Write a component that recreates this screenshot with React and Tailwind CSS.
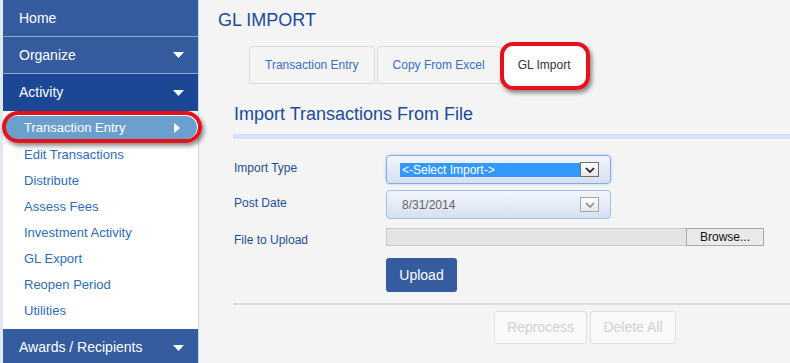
import React from 'react';

const menuItems = ['Edit Transactions', 'Distribute', 'Assess Fees', 'Investment Activity', 'GL Export', 'Reopen Period', 'Utilities'];

const Caret = () => (
  <svg width="11" height="6" viewBox="0 0 11 6" className="mr-[14px]">
    <polygon points="0,0 11,0 5.5,6" fill="#ffffff" />
  </svg>
);

const MenuHeader = ({ label, caret, dark, border = true }) => (
  <div
    className={`h-[37px] flex items-center justify-between pl-[16px] text-[14px] text-white ${
      dark ? 'bg-[#1b4795]' : 'bg-[#345c9f]'
    } ${border ? 'border-b border-[#8ea7cf]' : ''}`}
  >
    <span>{label}</span>
    {caret && <Caret />}
  </div>
);

const ArrowBox = ({ muted }) => (
  <div
    className={`w-[19px] h-[15px] flex items-center justify-center border bg-linear-to-b from-white to-[#e6e6e6] ${
      muted ? 'border-[#a5a5a5]' : 'border-[#707070]'
    }`}
  >
    <svg width="10" height="6" viewBox="0 0 10 6">
      <polyline points="1,1 5,5 9,1" fill="none" stroke={muted ? '#8a8a8a' : '#111111'} strokeWidth="1.6" />
    </svg>
  </div>
);

const SelectBox = ({ focused, children }) => (
  <div
    className={`h-[29px] w-[225px] rounded-[4px] border bg-linear-to-b from-[#f2f6fb] to-[#d5e0f0] flex items-center pl-[13px] pr-[11px] ${
      focused ? 'border-[#82ace6] shadow-[0_0_3px_#a8c8f0]' : 'border-[#a6c1e6]'
    }`}
  >
    {children}
  </div>
);

const App = () => {
  return (
    <div className="flex h-[363px] overflow-hidden bg-[#f4f4f4]" style={{ fontFamily: '"Liberation Sans", Arial, sans-serif' }}>
      {/* sidebar */}
      <div className="relative w-[199px] shrink-0 border-l-[3px] border-l-[#e3e7ee] border-r border-r-[#c6d5ec] bg-white">
        <MenuHeader label="Home" />
        <MenuHeader label="Organize" caret />
        <MenuHeader label="Activity" caret dark border={false} />

        <div className="bg-white pt-[5px] pb-[5px]">
          <div className="ml-[2px] mr-[1px] h-[23px] mb-[3px] rounded-full bg-[#6b9fcd] flex items-center justify-between pl-[19px] pr-[17px] text-[13px] text-white">
            <span>Transaction Entry</span>
            <svg width="6" height="10" viewBox="0 0 6 10">
              <polygon points="0,0 6,5 0,10" fill="#ffffff" />
            </svg>
          </div>
          {menuItems.map((item) => (
            <div key={item} className="h-[26px] leading-[26px] pl-[21px] text-[13px] text-[#2f6db5]">
              {item}
            </div>
          ))}
        </div>

        <MenuHeader label="Awards / Recipients" caret border={false} />

        {/* annotation ring */}
        <div className="absolute left-[-1px] top-[111px] w-[200px] h-[32px] rounded-full border-[4px] border-[#e5121b] shadow-[2px_3px_4px_rgba(0,0,0,0.45)] z-10 pointer-events-none" />
      </div>

      {/* main */}
      <div className="flex-1 pl-[19px] pt-[10px]">
        <h1 className="text-[18px] leading-[20px] text-[#1d4b9a]">GL IMPORT</h1>

        <div className="mt-[16px] ml-[31px] flex gap-[2px] text-[12px]">
          <div className="h-[38px] px-[15px] flex items-center border border-[#dcdcdc] rounded-t-[4px] bg-[#f4f4f4] text-[#3b6fc6]">
            Transaction Entry
          </div>
          <div className="h-[38px] px-[15px] flex items-center border border-[#dcdcdc] rounded-t-[4px] bg-[#f4f4f4] text-[#3b6fc6]">
            Copy From Excel
          </div>
          <div className="relative h-[38px] px-[15px] flex items-center bg-white text-[#333333]">
            GL Import
            <div className="absolute -left-[3px] -right-[4px] -top-[4px] -bottom-[6px] rounded-[13px] border-[4px] border-[#e5121b] shadow-[2px_3px_4px_rgba(0,0,0,0.45)] pointer-events-none" />
          </div>
        </div>

        <div className="ml-[15px] mt-[20px]">
          <h2 className="pl-[1px] text-[18px] leading-[20px] text-[#1d4b9a]">Import Transactions From File</h2>
          <div className="mt-[10px] h-[5px] bg-[#d6e2f3]" />

          <div className="mt-[16px] flex flex-col gap-[6px] text-[12px]">
            <div className="flex items-center">
              <div className="w-[153px] pl-[1px] pb-[3px] text-[#1f4e9a]">Import Type</div>
              <SelectBox focused>
                <div className="flex-1 h-[14px] leading-[14px] bg-[#3399ff] text-white pl-[2px]">&lt;-Select Import-&gt;</div>
                <ArrowBox />
              </SelectBox>
            </div>
            <div className="flex items-center">
              <div className="w-[153px] pl-[1px] pb-[3px] text-[#1f4e9a]">Post Date</div>
              <SelectBox>
                <div className="flex-1 pl-[2px] text-[#666666]">8/31/2014</div>
                <ArrowBox muted />
              </SelectBox>
            </div>
            <div className="flex items-center">
              <div className="w-[153px] pl-[1px] pt-[6px] text-[#1f4e9a]">File to Upload</div>
              <div className="w-[378px] h-[18px] flex">
                <div className="flex-1 bg-[#e4e4e4] border border-[#c9c9c9] border-r-0" />
                <div className="w-[78px] border border-[#a8a8a8] bg-[#eaeaea] text-[#111111] flex items-center justify-center">
                  Browse...
                </div>
              </div>
            </div>
          </div>

          <button className="mt-[9px] ml-[153px] h-[34px] w-[71px] rounded-[3px] bg-[#345c9f] text-[14px] text-white">
            Upload
          </button>

          <div className="mt-[11px] h-[2px] bg-[#dcdcdc]" />

          <div className="mt-[6px] ml-[261px] flex gap-[3px] text-[14px]">
            <button className="h-[33px] w-[93px] rounded-[3px] border border-[#e1e1e1] bg-[#f9f9f9] text-[#d2d2d2]">
              Reprocess
            </button>
            <button className="h-[33px] w-[86px] rounded-[3px] border border-[#e1e1e1] bg-[#f9f9f9] text-[#d2d2d2]">
              Delete All
            </button>
          </div>
        </div>
      </div>
    </div>
  );
};

export default App;
